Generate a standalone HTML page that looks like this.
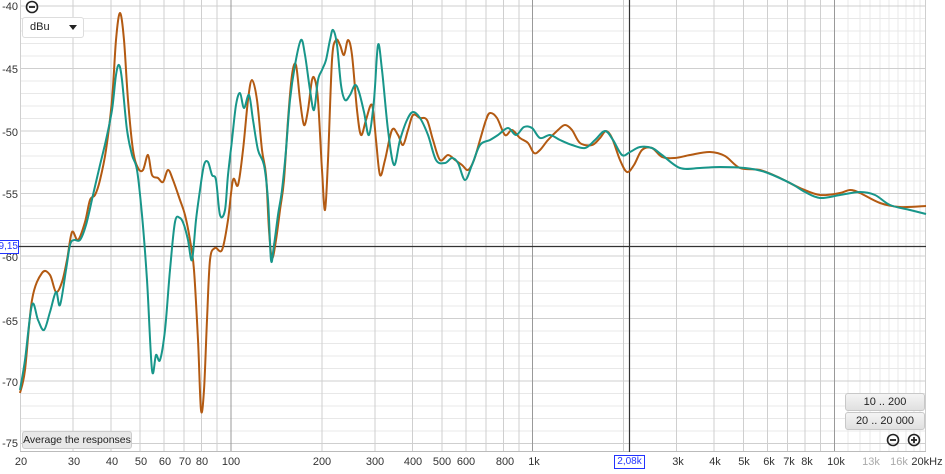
<!DOCTYPE html><html><head><style>
body{margin:0;width:945px;height:474px;background:#fff;overflow:hidden;font-family:"Liberation Sans",sans-serif;position:relative}
.yl{position:absolute;left:0;width:18px;font-size:11px;color:#333;text-align:right;line-height:12px}
.xl{position:absolute;top:456px;font-size:11px;color:#333;transform:translateX(-50%)}
.btn{position:absolute;left:845px;width:78px;height:16px;background:linear-gradient(#f4f4f4,#e0e0e0);border:1px solid #c8c8c8;border-radius:3px;font-size:11px;text-align:center;line-height:16px;color:#222}
</style></head><body>
<svg width="945" height="474" style="position:absolute;left:0;top:0">
<g stroke="#e8e8e8" stroke-width="1">
<path d="M20 18.5H926M20 31H926M20 43.5H926M20 56H926M20 81H926M20 93.5H926M20 106H926M20 118.5H926M20 143.5H926M20 156H926M20 168.5H926M20 181H926M20 206H926M20 218.5H926M20 231H926M20 243.5H926M20 268.5H926M20 281H926M20 293.5H926M20 306H926M20 331H926M20 343.5H926M20 356H926M20 368.5H926M20 393.5H926M20 406H926M20 418.5H926M20 431H926"/>
<path d="M848 0V451M860 0V451M870 0V451M880 0V451M889 0V451M898 0V451M906 0V451M914 0V451M920 0V451"/>
</g>
<g stroke="#cfcfcf" stroke-width="1">
<path d="M20 6H926M20 68.5H926M20 131H926M20 193.5H926M20 256H926M20 318.5H926M20 381H926M20 443.5H926"/>
<path d="M20.5 0V451M73 0V451M111 0V451M140 0V451M164 0V451M184 0V451M201.5 0V451M217 0V451M322 0V451M375 0V451M412.5 0V451M442 0V451M466 0V451M486 0V451M503.5 0V451M519 0V451M623.5 0V451M676.5 0V451M714 0V451M743.5 0V451M767.5 0V451M787.5 0V451M805 0V451M820.5 0V451M925.5 0V451"/>
</g>
<g stroke="#999" stroke-width="1"><path d="M231 0V451M532.5 0V451M834.5 0V451"/></g>
<path d="M20 451.5H926" stroke="#bbb"/>
<path d="M629.5 0V452M0 246.5H926" stroke="#333" stroke-width="1.2"/>
<polyline class="cv" fill="none" stroke="#b35a12" stroke-width="2" stroke-linejoin="round" points="20,393 25,370 32,300 42,273 50,275 56,292 62,282 67,260 72,232 78,240 85,222 90,200 95,195 100,180 106,150 112,100 116,40 120,13 124,40 128,100 133,150 138,168 143,170 148,155 152,175 158,178 163,182 168,170 173,180 180,200 185,215 190,240 194,270 198,340 201,410 204,390 207,320 210,260 215,248 222,250 228,220 233,180 238,185 243,150 248,100 252,80 257,100 262,150 266,175 269,230 272,258 276,240 280,210 284,180 288,120 292,75 296,65 300,100 304,125 308,110 312,80 315,80 318,100 322,170 325,210 328,160 332,60 336,40 340,45 344,55 348,40 352,55 357,110 361,135 366,120 372,105 376,140 380,175 385,160 392,130 398,135 403,145 408,130 413,115 420,118 427,120 433,140 440,160 448,155 455,160 462,165 468,170 474,160 480,140 486,120 490,113 497,118 505,135 512,130 520,138 528,143 534,153 540,150 548,140 558,130 565,125 572,130 580,143 592,145 600,138 606,131 612,138 620,160 627,172 634,165 642,150 652,148 662,157 675,158 690,155 710,152 725,156 740,168 760,170 780,178 800,188 820,195 840,193 850,190 860,193 880,203 900,207 926,206"/>
<polyline class="cv" fill="none" stroke="#18968a" stroke-width="2" stroke-linejoin="round" points="20,390 25,360 32,305 38,320 44,330 50,312 56,292 60,305 66,270 70,245 74,240 80,240 86,225 93,195 100,165 106,140 112,110 116,75 119,65 122,80 127,130 132,155 137,170 142,215 147,280 152,370 156,355 160,360 165,330 170,270 175,222 180,218 184,225 188,240 192,260 196,220 200,190 204,165 208,162 212,175 216,180 220,215 225,210 228,175 232,140 236,105 240,93 244,108 249,95 253,120 258,150 264,165 268,200 271,260 274,245 278,215 282,190 286,150 290,100 295,65 301,40 305,55 310,90 314,110 318,80 322,70 326,60 330,40 333,30 337,45 341,85 345,100 350,95 355,85 359,92 364,112 369,135 374,100 378,45 382,70 388,130 394,165 400,140 407,120 413,112 420,118 428,135 436,160 445,163 452,158 458,163 465,180 472,165 480,145 490,140 498,135 508,128 516,135 524,127 532,128 540,138 550,135 560,140 572,145 585,148 595,140 605,131 613,140 622,155 630,152 640,147 652,148 662,155 680,168 700,168 720,167 745,168 765,172 790,183 805,192 820,198 840,195 860,192 875,195 890,205 910,210 926,214"/>
<circle cx="32" cy="7" r="5.5" fill="none" stroke="#222" stroke-width="1.6"/><path d="M29 7H35" stroke="#222" stroke-width="1.8"/>
<circle cx="893" cy="440" r="5.5" fill="none" stroke="#222" stroke-width="1.6"/><path d="M890 440H896" stroke="#222" stroke-width="1.8"/>
<circle cx="914" cy="440" r="5.5" fill="none" stroke="#222" stroke-width="1.6"/><path d="M911 440H917M914 437V443" stroke="#222" stroke-width="1.8"/>
</svg>
<div class="yl" style="top:1px">-40</div>
<div class="yl" style="top:64px">-45</div>
<div class="yl" style="top:127px">-50</div>
<div class="yl" style="top:189px">-55</div>
<div class="yl" style="top:252px">-60</div>
<div class="yl" style="top:316px">-65</div>
<div class="yl" style="top:377px">-70</div>
<div class="yl" style="top:438px">-75</div>
<div style="position:absolute;left:-12px;top:240px;width:29px;height:12px;border:1px solid #2233ff;background:#fff;font-size:10px;color:#2233ff;text-align:right;line-height:12px">59,15</div>
<div style="position:absolute;left:22px;top:17px;width:60px;height:19px;border:1px solid #ddd;border-radius:3px;background:#fff;font-size:11px;line-height:19px;color:#222"><span style="margin-left:7px">dBu</span><span style="position:absolute;right:6px;top:7px;border:4px solid transparent;border-top:5px solid #222"></span></div>
<div style="position:absolute;left:22px;top:431px;width:108px;height:16px;background:#e8e8e8;border:1px solid #ccc;border-radius:3px;font-size:10.5px;line-height:16px;text-align:center;color:#222">Average the responses</div>
<div class="btn" style="top:393px">10 .. 200</div>
<div class="btn" style="top:412px">20 .. 20 000</div>
<div class="xl" style="left:21px">20</div><div class="xl" style="left:74px">30</div><div class="xl" style="left:112px">40</div><div class="xl" style="left:141px">50</div><div class="xl" style="left:165px">60</div><div class="xl" style="left:185px">70</div><div class="xl" style="left:202px">80</div><div class="xl" style="left:231px">100</div><div class="xl" style="left:322px">200</div><div class="xl" style="left:375px">300</div><div class="xl" style="left:413px">400</div><div class="xl" style="left:442px">500</div><div class="xl" style="left:466px">600</div><div class="xl" style="left:505px">800</div><div class="xl" style="left:534px">1k</div>
<div class="xl" style="left:678px">3k</div><div class="xl" style="left:715px">4k</div><div class="xl" style="left:744px">5k</div><div class="xl" style="left:769px">6k</div><div class="xl" style="left:789px">7k</div><div class="xl" style="left:807px">8k</div><div class="xl" style="left:836px">10k</div><div class="xl" style="left:871px;color:#aaa">13k</div><div class="xl" style="left:899px;color:#aaa">16k</div><div class="xl" style="left:927px">20kHz</div>
<div style="position:absolute;left:614px;top:455px;width:29px;height:12px;border:1px solid #2233ff;font-size:10px;color:#2233ff;text-align:center;line-height:12px;background:#fff">2,08k</div>
<script>
document.querySelectorAll('polyline.cv').forEach(function(pl){
var p=pl.getAttribute('points').trim().split(/\s+/).map(function(s){return s.split(',').map(Number)});
var d='M'+p[0][0]+' '+p[0][1];
for(var i=0;i<p.length-1;i++){var a=p[i-1]||p[i],b=p[i],c=p[i+1],e=p[i+2]||c;
d+='C'+(b[0]+(c[0]-a[0])/6).toFixed(1)+' '+(b[1]+(c[1]-a[1])/6).toFixed(1)+' '+(c[0]-(e[0]-b[0])/6).toFixed(1)+' '+(c[1]-(e[1]-b[1])/6).toFixed(1)+' '+c[0]+' '+c[1];}
var n=document.createElementNS('http://www.w3.org/2000/svg','path');
n.setAttribute('d',d);n.setAttribute('fill','none');n.setAttribute('stroke',pl.getAttribute('stroke'));n.setAttribute('stroke-width','2');
pl.parentNode.replaceChild(n,pl);});
</script>
</body></html>
